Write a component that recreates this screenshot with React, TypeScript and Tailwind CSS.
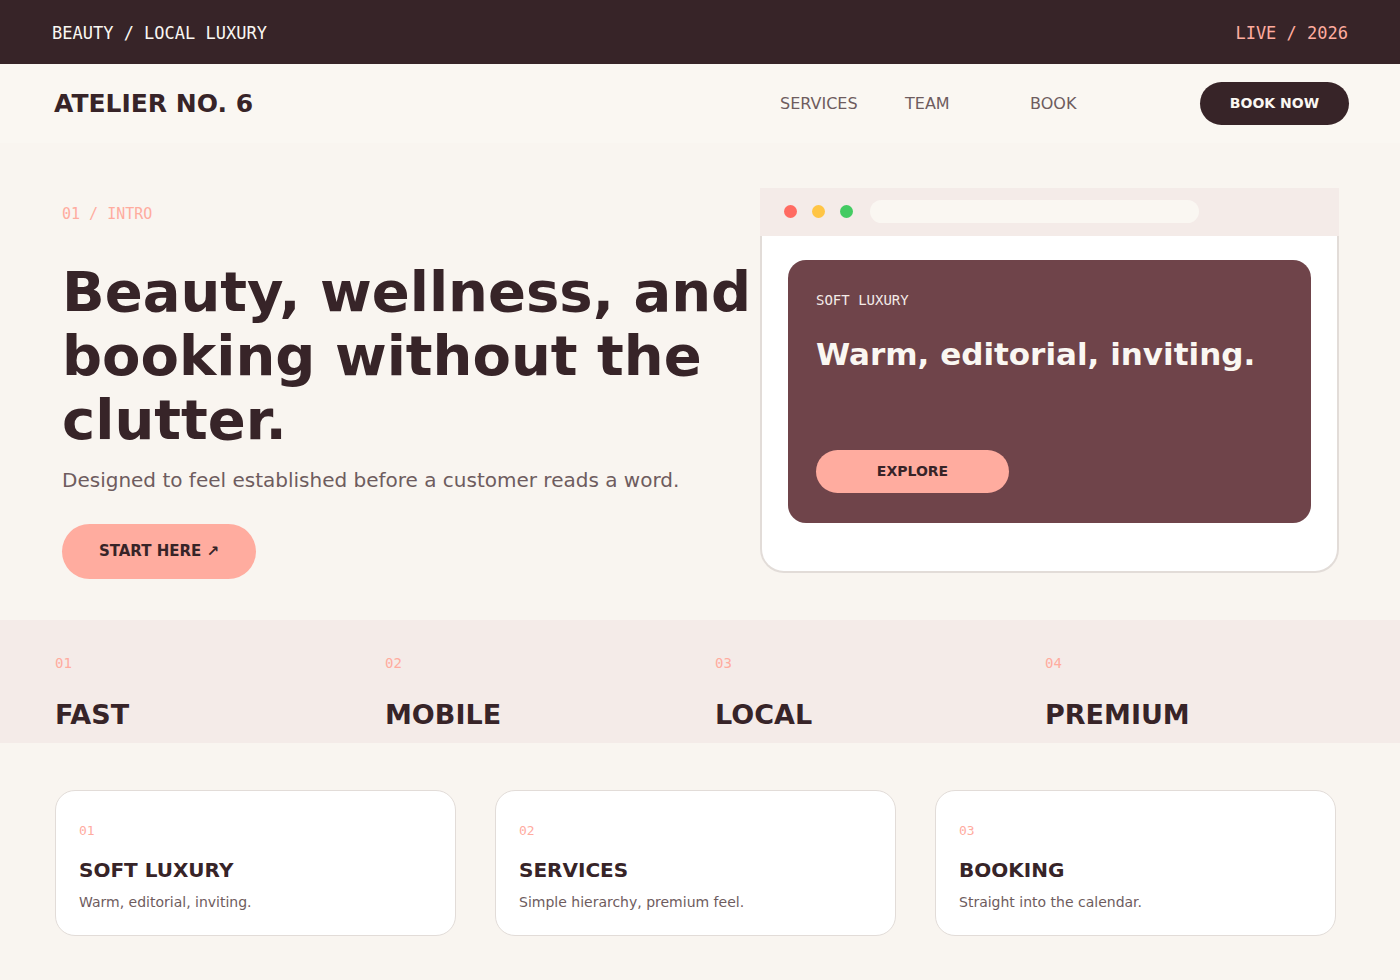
import { clsx } from 'clsx';

const navLinks = ['SERVICES', 'TEAM', 'BOOK'];

const stats = ['FAST', 'MOBILE', 'LOCAL', 'PREMIUM'];

const cards = [
  { title: 'SOFT LUXURY', text: 'Warm, editorial, inviting.' },
  { title: 'SERVICES', text: 'Simple hierarchy, premium feel.' },
  { title: 'BOOKING', text: 'Straight into the calendar.' },
];

const mono = "font-['DejaVu_Sans_Mono',monospace]";

function Index({ value, className }: { value: number; className?: string }) {
  return (
    <p className={clsx(mono, 'leading-5 text-[#ffac9f]', className)}>
      {String(value).padStart(2, '0')}
    </p>
  );
}

function TopBar() {
  return (
    <div
      className={clsx(
        mono,
        'flex justify-between bg-[#372428] px-[52px] pt-[21px] pb-[19px] text-[17px] leading-6 text-[#faf7f2]'
      )}
    >
      <span>BEAUTY / LOCAL LUXURY</span>
      <span className="text-[#ffac9f]">LIVE / 2026</span>
    </div>
  );
}

function Header() {
  return (
    <header className="flex items-center bg-[#faf7f2] py-[18px] pr-[51px] pl-[54px]">
      <a href="#" className="text-[25px] font-bold">
        ATELIER NO. 6
      </a>
      <nav className="mr-[45px] ml-auto flex text-base text-[#6e5c5e]">
        {navLinks.map((link) => (
          <div key={link} className="w-[125px]">
            <a href={`#${link.toLowerCase()}`}>{link}</a>
          </div>
        ))}
      </nav>
      <button className="h-[43px] w-[149px] rounded-full bg-[#372428] pb-px text-sm font-bold text-[#faf7f2]">
        BOOK NOW
      </button>
    </header>
  );
}

function Preview() {
  return (
    <div className="mt-[45px]">
      <div className="flex h-12 items-center bg-[#f4ebe8] pr-[140px] pb-[2px] pl-6">
        <div className="mr-[17px] flex gap-[15px]">
          <span className="size-[13px] rounded-full bg-[#ff6b62]" />
          <span className="size-[13px] rounded-full bg-[#ffc545]" />
          <span className="size-[13px] rounded-full bg-[#43cb62]" />
        </div>
        <div className="h-[23px] flex-1 rounded-full bg-[#faf7f2]" />
      </div>
      <div className="rounded-b-3xl border-x-2 border-b-2 border-[#e2dcd8] bg-white px-[26px] pt-6 pb-12">
        <div className="rounded-[18px] bg-[#6f444a] px-7 py-[30px] text-[#faf7f2]">
          <p className={clsx(mono, 'text-sm leading-5 text-[#f4ebe8]')}>
            SOFT LUXURY
          </p>
          <h2 className="mt-6 text-[31px] leading-10 font-bold">
            Warm, editorial, inviting.
          </h2>
          <button className="mt-[76px] block h-[43px] w-[193px] rounded-full bg-[#ffac9f] pb-px text-sm font-bold text-[#372428]">
            EXPLORE
          </button>
        </div>
      </div>
    </div>
  );
}

function Hero() {
  return (
    <section className="grid grid-cols-[698fr_579fr] pr-[61px] pb-[41px] pl-[62px]">
      <div className="pt-[61px]">
        <p className={clsx(mono, 'text-[15px] leading-5 text-[#ffac9f]')}>
          01 / INTRO
        </p>
        <h1 className="mt-9 text-[56px] leading-16 font-bold">
          Beauty, wellness, and booking without the clutter.
        </h1>
        <p className="mt-[14px] text-xl leading-7 text-[#6e5c5e]">
          Designed to feel established before a customer reads a word.
        </p>
        <button className="mt-[30px] block h-[55px] w-[194px] rounded-full bg-[#ffac9f] text-[15px] font-bold">
          START HERE ↗
        </button>
      </div>
      <Preview />
    </section>
  );
}

export default function App() {
  return (
    <div className="min-h-screen bg-[#f9f5f0] font-['DejaVu_Sans',sans-serif] text-[#372428]">
      <TopBar />
      <Header />
      <main>
        <Hero />
        <section className="grid grid-cols-4 bg-[#f4ebe8] pt-[33px] pr-[25px] pb-[10px] pl-[55px]">
          {stats.map((stat, i) => (
            <div key={stat}>
              <Index value={i + 1} className="text-sm" />
              <h2 className="mt-6 text-[27px] leading-9 font-bold">{stat}</h2>
            </div>
          ))}
        </section>
        <section className="grid grid-cols-3 gap-[39px] pt-[47px] pr-16 pb-11 pl-[55px]">
          {cards.map((card, i) => (
            <article
              key={card.title}
              className="rounded-[20px] border border-[#e2dcd8] bg-white px-[23px] pt-[30px] pb-[23px]"
            >
              <Index value={i + 1} className="text-[13px]" />
              <h3 className="mt-[15px] text-xl leading-7 font-bold">
                {card.title}
              </h3>
              <p className="mt-2 text-sm leading-5 text-[#6e5c5e]">
                {card.text}
              </p>
            </article>
          ))}
        </section>
      </main>
    </div>
  );
}
